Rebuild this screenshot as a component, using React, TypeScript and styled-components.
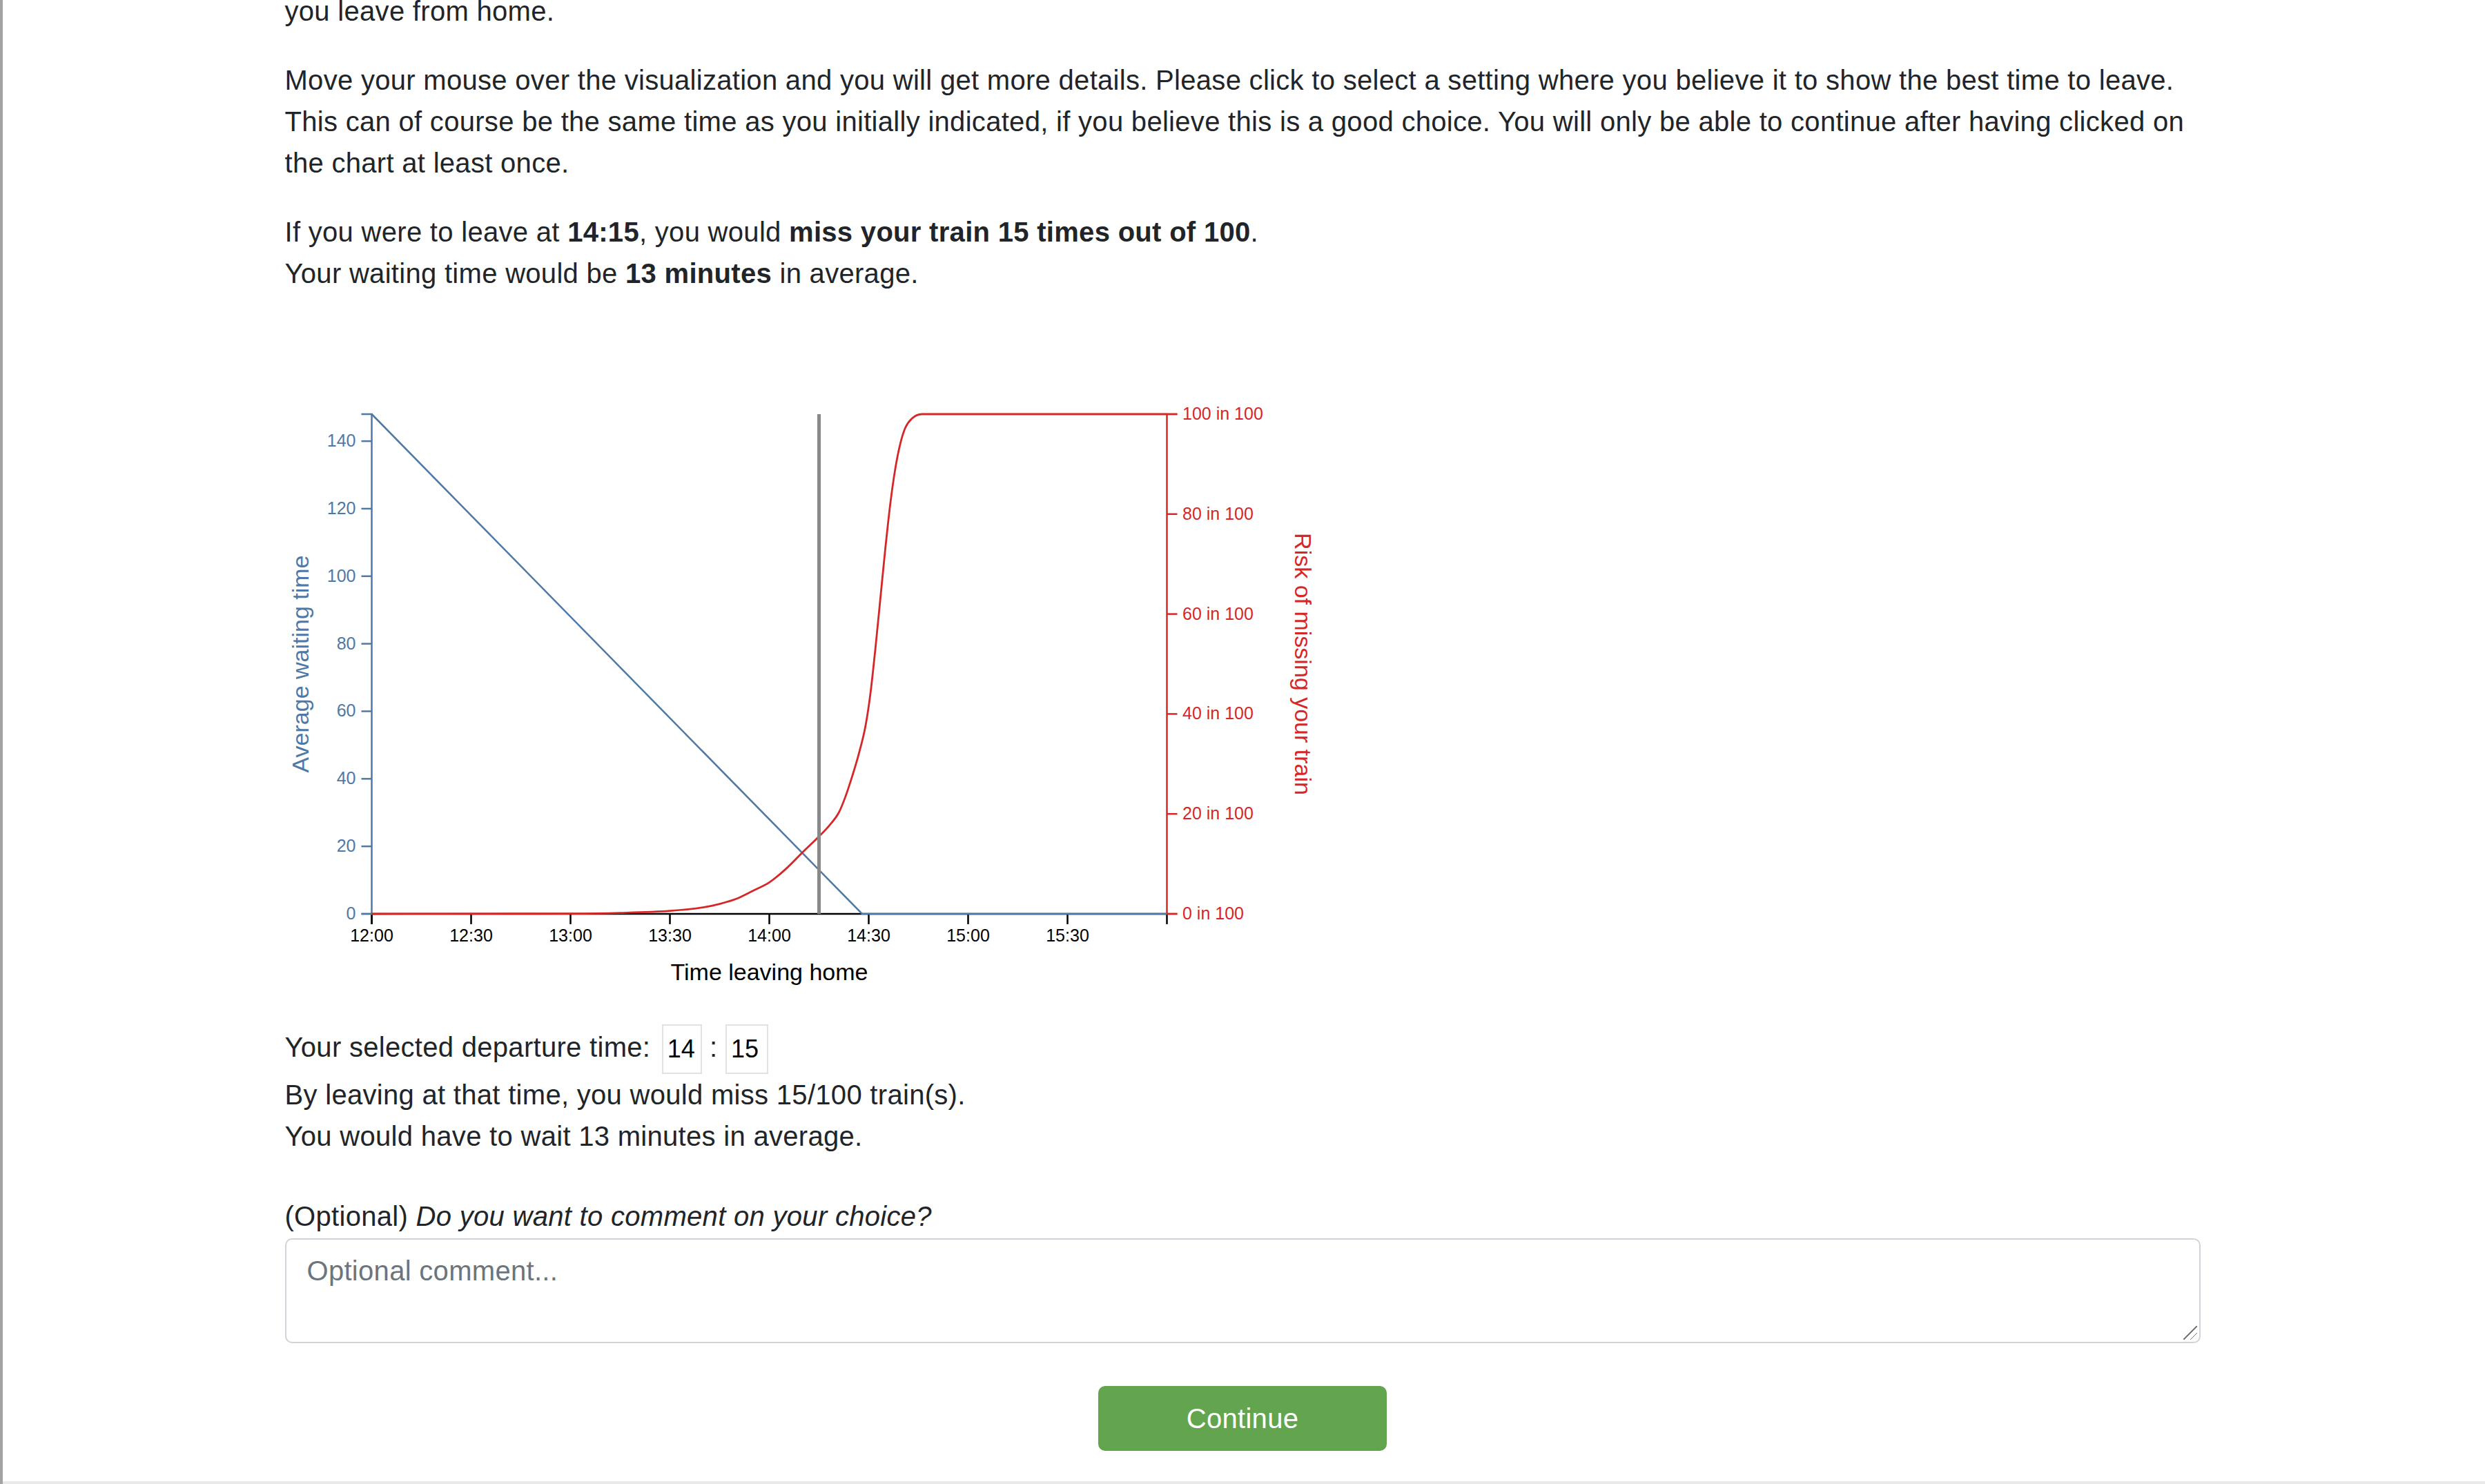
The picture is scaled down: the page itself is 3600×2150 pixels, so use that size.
import React from "react";
import styled, { createGlobalStyle } from "styled-components";

const GlobalStyle = createGlobalStyle`
  html, body { margin: 0; padding: 0; background: #ffffff; }
  body {
    font-family: "Liberation Sans", Arial, Helvetica, sans-serif;
    font-size: 40px;
    line-height: 1.5;
    color: #212529;
  }
  *, *::before, *::after { box-sizing: border-box; }
`;

const Frame = styled.div`
  min-height: 100vh;
  overflow: hidden;
  box-shadow: inset 4px 0 0 #a3a3a3, inset 0 -4px 0 #e9e9e9;
`;

const Container = styled.main`
  width: 2850px;
  margin: 0 auto;
  padding: 0 37.5px;
  letter-spacing: 0.3px;
`;

const Paragraph = styled.p<{ $pullUp?: number; $after?: number }>`
  margin: ${(p) => (p.$pullUp ? -p.$pullUp : 0)}px 0 ${(p) => p.$after ?? 40}px;
`;

const Strong = styled.strong`
  font-weight: 700;
`;

const TimeField = styled.input<{ $lead?: number }>`
  width: ${(p) => (p.$lead ? 58 : 62)}px;
  height: 72px;
  padding: 0 6px;
  margin: 0 0 0 ${(p) => p.$lead ?? 0}px;
  border: 2.5px solid #e2e2e2;
  border-radius: 0;
  background: #fff;
  color: #000;
  font-family: "Liberation Sans", Arial, sans-serif;
  font-size: 36px;
  letter-spacing: 0;
  vertical-align: middle;
  outline: none;
`;

const CommentLabel = styled.label`
  display: block;
  margin: 0 0 2px;
`;

const Prompt = styled.span`
  font-style: italic;
`;

const CommentField = styled.div`
  position: relative;
  &::after {
    content: "";
    position: absolute;
    right: 5px;
    bottom: 5px;
    width: 20px;
    height: 20px;
    pointer-events: none;
    background:
      linear-gradient(135deg, transparent 46%, #7a7a7a 46%, #7a7a7a 54%, transparent 54%) right bottom / 20px 20px no-repeat,
      linear-gradient(135deg, transparent 46%, #7a7a7a 46%, #7a7a7a 54%, transparent 54%) right bottom / 10px 10px no-repeat;
  }
`;

const CommentBox = styled.textarea`
  display: block;
  width: 100%;
  height: 152px;
  padding: 15px 30px;
  margin: 0;
  font-family: "Liberation Sans", Arial, sans-serif;
  font-size: 40px;
  line-height: 60px;
  letter-spacing: 0.3px;
  color: #495057;
  background: #fff;
  border: 2.5px solid #ced4da;
  border-radius: 10px;
  outline: none;
  resize: none;
  &::placeholder {
    color: #6c757d;
    opacity: 1;
  }
`;

const Actions = styled.div`
  display: flex;
  justify-content: center;
  margin-top: 62px;
`;

const ContinueButton = styled.button`
  width: 418px;
  height: 94px;
  padding: 0;
  background: #63a54e;
  border: 2.5px solid #63a54e;
  border-radius: 10px;
  color: #ffffff;
  font-family: "Liberation Sans", Arial, sans-serif;
  font-size: 40px;
  line-height: 60px;
  letter-spacing: 0.3px;
  cursor: pointer;
`;

/* ---------- chart ---------- */

const ChartSvg = styled.svg`
  display: block;
  overflow: visible;
  letter-spacing: 0;
`;

const TickText = styled.text<{ $color: string }>`
  font-family: "Liberation Sans", Arial, sans-serif;
  font-size: 25px;
  fill: ${(p) => p.$color};
`;

const AxisTitle = styled.text<{ $color: string }>`
  font-family: "Liberation Sans", Arial, sans-serif;
  font-size: 34px;
  fill: ${(p) => p.$color};
  text-anchor: middle;
`;

const Stroke = styled.path<{ $color: string; $width?: number }>`
  fill: none;
  stroke: ${(p) => p.$color};
  stroke-width: ${(p) => p.$width ?? 2.5};
`;

const BLUE = "#4e79a7";
const RED = "#d62728";
const AXIS_X = 125.5;
const TOP = 134;
const BOTTOM = 858;
const PX_PER_MIN = 4.8;
const RIGHT = AXIS_X + 240 * PX_PER_MIN;

const X = (m: number) => AXIS_X + m * PX_PER_MIN;
const YL = (v: number) => BOTTOM - v * ((BOTTOM - TOP) / 148);
const YR = (p: number) => BOTTOM - p * ((BOTTOM - TOP) / 100);

const riskPoints: [number, number][] = [
  [0, 0], [60, 0.05], [75, 0.2], [90, 0.6], [100, 1.3], [105, 2], [110, 3],
  [115, 4.6], [120, 6.3], [125, 9], [130, 12.3], [135, 15.5], [138, 17.6],
  [141, 20.3], [143, 23.5], [145, 27.5], [147, 32], [149, 37.5], [150.5, 44],
  [152, 53], [153.5, 63], [155, 73], [156.5, 82], [158, 89], [159.5, 94],
  [161, 97.2], [163, 99.1], [166, 100], [240, 100],
];

function monotonePath(pts: [number, number][]): string {
  const n = pts.length;
  const d: number[] = [];
  for (let i = 0; i < n - 1; i++) {
    d.push((pts[i + 1][1] - pts[i][1]) / (pts[i + 1][0] - pts[i][0]));
  }
  const m: number[] = new Array(n).fill(0);
  m[0] = d[0];
  m[n - 1] = d[n - 2];
  for (let i = 1; i < n - 1; i++) {
    m[i] = d[i - 1] * d[i] <= 0 ? 0 : (d[i - 1] + d[i]) / 2;
  }
  for (let i = 0; i < n - 1; i++) {
    if (d[i] === 0) {
      m[i] = 0;
      m[i + 1] = 0;
    } else {
      const a = m[i] / d[i];
      const b = m[i + 1] / d[i];
      const s = a * a + b * b;
      if (s > 9) {
        const t = 3 / Math.sqrt(s);
        m[i] = t * a * d[i];
        m[i + 1] = t * b * d[i];
      }
    }
  }
  let path = `M${X(pts[0][0]).toFixed(2)},${YR(pts[0][1]).toFixed(2)}`;
  for (let i = 0; i < n - 1; i++) {
    const [x0, y0] = pts[i];
    const [x1, y1] = pts[i + 1];
    const h = x1 - x0;
    const c1x = X(x0 + h / 3);
    const c1y = YR(y0 + (m[i] * h) / 3);
    const c2x = X(x1 - h / 3);
    const c2y = YR(y1 - (m[i + 1] * h) / 3);
    path += ` C${c1x.toFixed(2)},${c1y.toFixed(2)} ${c2x.toFixed(2)},${c2y.toFixed(2)} ${X(x1).toFixed(2)},${YR(y1).toFixed(2)}`;
  }
  return path;
}

const waitTicks = [0, 20, 40, 60, 80, 100, 120, 140];
const timeTicks = [
  [0, "12:00"], [30, "12:30"], [60, "13:00"], [90, "13:30"],
  [120, "14:00"], [150, "14:30"], [180, "15:00"], [210, "15:30"],
] as const;
const riskTicks = [0, 20, 40, 60, 80, 100];

function DepartureChart() {
  const selected = 135;
  return (
    <ChartSvg width={1600} height={1018} viewBox="0 0 1600 1018">
      {/* bottom axis */}
      <Stroke $color="#000" d={`M${AXIS_X},${BOTTOM + 15} V${BOTTOM} H${RIGHT} V${BOTTOM + 15}`} />
      {timeTicks.map(([m, label]) => (
        <g key={label} transform={`translate(${X(m)},${BOTTOM})`}>
          <Stroke $color="#000" d="M0,0 V15" />
          <TickText $color="#000" y={22.5} dy="0.71em" textAnchor="middle">
            {label}
          </TickText>
        </g>
      ))}
      <AxisTitle $color="#000" x={(AXIS_X + RIGHT) / 2} y={954}>
        Time leaving home
      </AxisTitle>

      {/* left axis */}
      <Stroke $color={BLUE} d={`M${AXIS_X - 15},${TOP} H${AXIS_X} V${BOTTOM} H${AXIS_X - 15}`} />
      {waitTicks.map((v) => (
        <g key={v} transform={`translate(${AXIS_X},${YL(v)})`}>
          <Stroke $color={BLUE} d="M0,0 H-15" />
          <TickText $color={BLUE} x={-23} dy="0.32em" textAnchor="end">
            {v}
          </TickText>
        </g>
      ))}
      <AxisTitle $color={BLUE} transform={`translate(33.5,${(TOP + BOTTOM) / 2}) rotate(-90)`}>
        Average waiting time
      </AxisTitle>

      {/* right axis */}
      <Stroke $color={RED} d={`M${RIGHT + 15},${TOP} H${RIGHT} V${BOTTOM} H${RIGHT + 15}`} />
      {riskTicks.map((p) => (
        <g key={p} transform={`translate(${RIGHT},${YR(p)})`}>
          <Stroke $color={RED} d="M0,0 H15" />
          <TickText $color={RED} x={22.5} dy="0.32em" textAnchor="start">
            {p} in 100
          </TickText>
        </g>
      ))}
      <AxisTitle $color={RED} transform={`translate(1462.5,${(TOP + BOTTOM) / 2}) rotate(90)`}>
        Risk of missing your train
      </AxisTitle>

      {/* data */}
      <Stroke $color={BLUE} d={`M${X(0)},${YL(148)} L${X(148)},${YL(0)} L${X(240)},${YL(0)}`} />
      <Stroke $color={RED} $width={2.8} d={monotonePath(riskPoints)} />
      <Stroke $color="#888888" $width={5} d={`M${X(selected)},${TOP} V${BOTTOM}`} />
    </ChartSvg>
  );
}

export default function App() {
  return (
    <>
      <GlobalStyle />
      <Frame>
        <Container>
          <Paragraph $pullUp={14}>you leave from home.</Paragraph>
          <Paragraph>
            Move your mouse over the visualization and you will get more details. Please click to
            select a setting where you believe it to show the best time to leave. This can of course
            be the same time as you initially indicated, if you believe this is a good choice. You
            will only be able to continue after having clicked on the chart at least once.
          </Paragraph>
          <Paragraph>
            If you were to leave at <Strong>14:15</Strong>, you would{" "}
            <Strong>miss your train 15 times out of 100</Strong>.
            <br />
            Your waiting time would be <Strong>13 minutes</Strong> in average.
          </Paragraph>
          <DepartureChart />
          <Paragraph $after={56}>
            Your selected departure time:{" "}
            <TimeField type="text" defaultValue="14" readOnly $lead={5} /> :{" "}
            <TimeField type="text" defaultValue="15" readOnly />
            <br />
            By leaving at that time, you would miss 15/100 train(s).
            <br />
            You would have to wait 13 minutes in average.
          </Paragraph>
          <CommentLabel htmlFor="comment">
            (Optional) <Prompt>Do you want to comment on your choice?</Prompt>
          </CommentLabel>
          <CommentField>
            <CommentBox id="comment" rows={2} placeholder="Optional comment..." />
          </CommentField>
          <Actions>
            <ContinueButton type="button">Continue</ContinueButton>
          </Actions>
        </Container>
      </Frame>
    </>
  );
}
